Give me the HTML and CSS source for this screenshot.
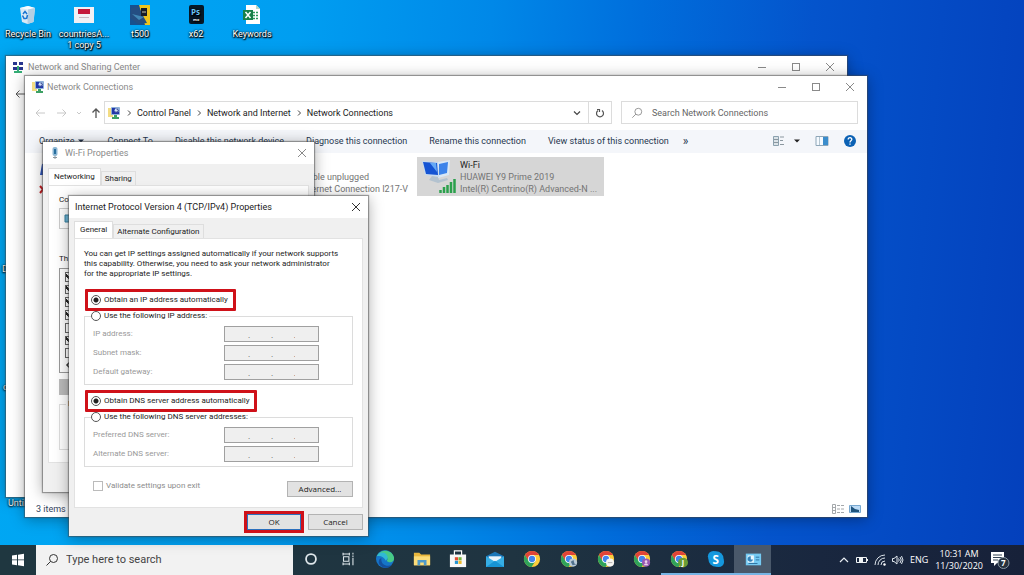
FILE: index.html
```html
<!DOCTYPE html>
<html lang="en">
<head>
<meta charset="utf-8">
<title>Desktop</title>
<link rel="stylesheet" href="styles.css">
</head>
<body>
<svg class="defs" aria-hidden="true">
  <symbol id="min" viewBox="0 0 10 10"><path d="M1 5.5h8" stroke="currentColor" fill="none"/></symbol>
  <symbol id="max" viewBox="0 0 10 10"><rect x="1.5" y="1.5" width="7" height="7" stroke="currentColor" fill="none"/></symbol>
  <symbol id="close" viewBox="0 0 10 10"><path d="M1 1l8 8M9 1L1 9" stroke="currentColor" fill="none"/></symbol>
  <symbol id="left" viewBox="0 0 12 12"><path d="M11 6H2M5.500 2.500L2 6l3.500 3.500" stroke="currentColor" fill="none"/></symbol>
  <symbol id="chev" viewBox="0 0 6 8"><path d="M2 1.500L4.500 4 2 6.500" stroke="currentColor" fill="none"/></symbol>
  <symbol id="mag" viewBox="0 0 14 14"><circle cx="8.500" cy="5.500" r="4" stroke="currentColor" fill="none"/><path d="M5.700 8.300L1.500 12.500" stroke="currentColor" fill="none"/></symbol>
  <symbol id="netfolder" viewBox="0 0 14 14">
    <path d="M1 2h5v9H1z" fill="#f3dc83"/><rect x="4" y="1" width="9" height="8" rx="1" fill="#8eb0d8"/>
    <path d="M5 2h3.500v3l3.500 1v2H5z" fill="#2236a8"/><circle cx="9.500" cy="4.500" r="2" fill="#cfe2f8"/><path d="M9.500 3a1.600 1.600 0 1 1-1 2.700" stroke="#15207c" fill="none"/>
    <path d="M7 9h3v2h2v2H5v-2h2z" fill="#3da164"/></symbol>
  <symbol id="chrome" viewBox="0 0 20 20">
    <circle cx="10" cy="10" r="9" fill="#fccd3c"/><path d="M10 5.500L10 10L6 12.300L2.200 5.500A9 9 0 0 1 17.800 5.500z" fill="#e04438"/><path d="M2.200 5.500A9 9 0 0 0 9.500 19l4.400-6.700L10 10l-4 2z" fill="#2fa35a"/>
    <circle cx="10" cy="10" r="4.400" fill="#fff"/><circle cx="10" cy="10" r="3.500" fill="#4184ee"/></symbol>
</svg>

<main class="desktop">
  <ul class="shortcuts">
    <li><svg class="ic" viewBox="0 0 20 20"><path d="M2 3l8-2 7 2-1.500 14-6 2L4 17z" fill="#d9e9f5"/><path d="M2 3l8 1.500L17 3l-7-2z" fill="#f6fbff"/><path d="M10 4.500l7-1.500-1.500 14-6 2z" fill="#b4cfe3"/><path d="M5 9l2-2.500L9 9M9.500 10l-1 4M4.500 10.500L6 13.500h2" stroke="#1975d1" stroke-width="1.500" fill="none"/></svg><span>Recycle Bin</span></li>
    <li><svg class="ic" viewBox="0 0 20 20"><path d="M0 2h20v16H0z" fill="#f1f0f4"/><path d="M4 4h12v5H4z" fill="#c4183a"/><path d="M5 12.500h10" stroke="#c9b9c1"/></svg><span>countriesA...<br>1 copy 5</span></li>
    <li><svg class="ic" viewBox="0 0 20 20"><path d="M0 0h20v20H0z" fill="#17508e"/><path d="M9 0h11v20h-5z" fill="#efc51c"/><path d="M1 3l7-2 4 8 5 9-9 1-8-6z" fill="#244e82"/><path d="M11 3h6v8h-6z" fill="#181d26" /><path d="M12 7h4" stroke="#c7c7ac"/><path d="M2 9l12 3-5 3z" fill="#4187b5"/></svg><span>t500</span></li>
    <li><svg class="ic" viewBox="0 0 20 20"><rect x="3" y="0" width="15" height="19" rx="2" fill="#061826"/><text x="5" y="10" class="ps">Ps</text><text x="7" y="16" class="ps-sub">mx</text></svg><span>x62</span></li>
    <li><svg class="ic" viewBox="0 0 20 20"><path d="M4 0h10l4 4v15H4z" fill="#fff"/><path d="M14 0v4h4z" fill="#b9d7c5"/><path d="M11 7.500h5M11 10.500h5M11 13.500h5" stroke="#2b9a5b" stroke-width="1.500" stroke-dasharray="2 1"/><path d="M1 5h10v10H1z" fill="#188048"/><path d="M3.500 7l5 6M8.500 7l-5 6" stroke="#fff" stroke-width="1.500"/></svg><span>Keywords</span></li>
  </ul>
  <span class="peek peek-a">D</span><span class="peek peek-b">c</span><span class="peek peek-c">Until</span>

  <section class="win sharing" aria-label="Network and Sharing Center">
    <header class="title"><svg class="i12" viewBox="0 0 12 12"><path d="M1 1h4v3H1zM7 1h4v3H7zM1 6h4v3H1zM7 6h4v3H7z" fill="#29368e"/><path d="M5 5h2v5h3v2H2v-2h3z" fill="#35ae76"/></svg><h2>Network and Sharing Center</h2>
      <div class="caps"><button aria-label="Minimize"><svg><use href="#min"/></svg></button><button aria-label="Maximize"><svg><use href="#max"/></svg></button><button aria-label="Close"><svg><use href="#close"/></svg></button></div></header>
    <div class="back"><svg class="i12"><use href="#left"/></svg></div>
  </section>

  <section class="win connections" aria-label="Network Connections">
    <header class="title"><svg class="i14"><use href="#netfolder"/></svg><h2>Network Connections</h2>
      <div class="caps"><button aria-label="Minimize"><svg><use href="#min"/></svg></button><button aria-label="Maximize"><svg><use href="#max"/></svg></button><button aria-label="Close"><svg><use href="#close"/></svg></button></div></header>
    <div class="nav">
      <div class="arrows"><svg class="i12"><use href="#left"/></svg><svg class="i12 flip"><use href="#left"/></svg><svg class="i6" viewBox="0 0 6 8"><path d="M1 3l2 2 2-2" stroke="currentColor" fill="none"/></svg><svg class="i12 up" viewBox="0 0 12 12"><path d="M6 11V2M2.500 5.500L6 2l3.500 3.500" stroke="currentColor" stroke-width="1.300" fill="none"/></svg></div>
      <div class="address"><svg class="i14"><use href="#netfolder"/></svg>
        <svg class="i6"><use href="#chev"/></svg><a href="#cp">Control Panel</a><svg class="i6"><use href="#chev"/></svg><a href="#ni">Network and Internet</a><svg class="i6"><use href="#chev"/></svg><a href="#nc">Network Connections</a>
        <button class="drop" aria-label="Previous locations"><svg class="i10" viewBox="0 0 10 10"><path d="M2 3.500L5 6.500 8 3.500" stroke="#444" fill="none" stroke-width="1.200"/></svg></button>
        <button class="refresh" aria-label="Refresh"><svg class="i10" viewBox="0 0 10 10"><path d="M3 2.500A3.500 3.500 0 1 0 7 2.500M2 1.500h2.500V4" stroke="#555" fill="none" stroke-width="1.200"/></svg></button></div>
      <label class="search"><svg class="i12"><use href="#mag"/></svg><input type="text" placeholder="Search Network Connections" aria-label="Search Network Connections"></label>
    </div>
    <div class="commands">
      <button>Organize <svg class="i8" viewBox="0 0 8 8"><path d="M1 2.500h6L4 5.500z" fill="#1c2c45"/></svg></button><button>Connect To</button><button>Disable this network device</button><button>Diagnose this connection</button><button>Rename this connection</button><button>View status of this connection</button><button class="more">»</button>
      <div class="views"><svg class="i14" viewBox="0 0 14 14"><path d="M1.500 2.500h5v9h-5z" fill="#dbe3e8" stroke="#8ba1ae"/><path d="M2 5.500h4M2 8.500h4M8 3h4M8 6.500h3M8 10.500h4" stroke="#8b979f"/></svg><svg class="i8" viewBox="0 0 8 8"><path d="M1 2.500h6L4 5.500z" fill="#222"/></svg><svg class="i14 pane" viewBox="0 0 14 14"><path d="M1 2.500h12v9H1z" fill="#f5faff" stroke="#8ea6b8"/><path d="M8 3h5v8H8z" fill="#3b8dcc"/><path d="M4.500 3v8" stroke="#b4c5d0"/></svg><svg class="i14" viewBox="0 0 14 14"><circle cx="7" cy="7" r="6" fill="#0b61b4"/><path d="M5.200 5.500c0-2.500 3.800-2.300 3.600 0C8.700 6.800 7 6.800 7 8.400M7 9.500v1.300" stroke="#fff" stroke-width="1.300" fill="none"/></svg></div>
    </div>
    <div class="items">
      <div class="item ethernet"><svg viewBox="0 0 18 36"><path d="M3 5l9-2v13H1z" fill="#2c52b9"/><path d="M1 27l6 7M7 27l-6 7" stroke="#c21b20" stroke-width="2"/></svg><p><br><span>Network cable unplugged</span><br><span>Intel(R) Ethernet Connection I217-V</span></p></div>
      <div class="item wifi"><svg viewBox="0 0 36 36"><path d="M17 3l12-2-1 15-11 3z" fill="#d9e8f5"/><path d="M18 5l9-2-1 11-8 2z" fill="#3b83ea"/><path d="M1 2l16 1 1 15-14-2z" fill="#c7dbef"/><path d="M2 3l14 1 1 12-12-1z" fill="#1554d3"/><path d="M9 4l6 0 1 9z" fill="#65a9f5"/><path d="M11 17l6 1 1 3 8-2 1 2-10 3-9-3z" fill="#b3c2cf"/><path d="M19.500 34v-3M23 34v-6M26.500 34v-8M30 34V23M33.500 34V20" stroke="#2ba04c" stroke-width="2.500"/></svg><p>Wi-Fi<br><span>HUAWEI Y9 Prime 2019</span><br><span>Intel(R) Centrino(R) Advanced-N ...</span></p></div>
    </div>
    <footer class="status"><span>3 items</span><span class="modes"><svg class="i12" viewBox="0 0 12 12"><path d="M.5 1.500h3v9h-3zM1 4.500h2M1 7.500h2M5 2.500h3M5 6h3M5 9.500h3M9 2.500h3M9 6h3M9 9.500h3" stroke="#a4a8ab" fill="none"/></svg><svg class="i12" viewBox="0 0 12 12"><path d="M.5 2.500h11v7H.5z" fill="#bddcf7" stroke="#78a8d0"/><path d="M2 3l4 3 4 1v2H2z" fill="#1e537d"/></svg></span></footer>
  </section>

  <section class="win wifiprops" aria-label="Wi-Fi Properties">
    <header class="title"><svg class="i12" viewBox="0 0 12 12"><rect x="3.500" y="0" width="5" height="9" rx="2" fill="#8cb6d3"/><path d="M5 2h2v5H5z" fill="#296f9f"/><path d="M6 9v3M4 10.500h4" stroke="#8a969e" fill="none"/></svg><h2>Wi-Fi Properties</h2><div class="caps"><button aria-label="Close"><svg><use href="#close"/></svg></button></div></header>
    <div class="tabs"><button class="tab on">Networking</button><button class="tab">Sharing</button></div>
    <div class="page">
      <p>Co</p>
      <div class="adapter"><svg class="i12" viewBox="0 0 12 12"><path d="M1 2h8v7H1z" fill="#6ab3d4" stroke="#367f9e"/></svg></div>
      <p>Th</p>
      <div class="list"><input type="checkbox" checked aria-label="Item 1"><input type="checkbox" checked aria-label="Item 2"><input type="checkbox" checked aria-label="Item 3"><input type="checkbox" checked aria-label="Item 4"><input type="checkbox" aria-label="Item 5"><input type="checkbox" checked aria-label="Item 6"><input type="checkbox" aria-label="Item 7"><svg class="i8" viewBox="0 0 8 8"><path d="M5 1L2 4l3 3" stroke="#333" stroke-width="1.500" fill="none"/></svg></div>
      <button class="install" aria-label="Install"></button>
      <fieldset class="descr"><legend>D</legend></fieldset>
    </div>
  </section>

  <section class="win ipv4" aria-label="Internet Protocol Version 4 (TCP/IPv4) Properties">
    <header class="title"><h2>Internet Protocol Version 4 (TCP/IPv4) Properties</h2><div class="caps"><button aria-label="Close"><svg><use href="#close"/></svg></button></div></header>
    <div class="tabs"><button class="tab on">General</button><button class="tab">Alternate Configuration</button></div>
    <form class="page">
      <p>You can get IP settings assigned automatically if your network supports<br>this capability. Otherwise, you need to ask your network administrator<br>for the appropriate IP settings.</p>
      <label class="radio marked"><input type="radio" name="ip" checked>Obtain an IP address automatically</label>
      <fieldset class="group"><legend><label class="radio"><input type="radio" name="ip">Use the following IP address:</label></legend>
        <label class="field">IP address:<input type="text" disabled value=".          .          ."></label>
        <label class="field">Subnet mask:<input type="text" disabled value=".          .          ."></label>
        <label class="field">Default gateway:<input type="text" disabled value=".          .          ."></label></fieldset>
      <label class="radio marked"><input type="radio" name="dns" checked>Obtain DNS server address automatically</label>
      <fieldset class="group"><legend><label class="radio"><input type="radio" name="dns">Use the following DNS server addresses:</label></legend>
        <label class="field">Preferred DNS server:<input type="text" disabled value=".          .          ."></label>
        <label class="field">Alternate DNS server:<input type="text" disabled value=".          .          ."></label></fieldset>
      <div class="bottom"><label class="radio off"><input type="checkbox" disabled>Validate settings upon exit</label><button type="button" class="btn">Advanced...</button></div>
    </form>
    <div class="actions"><span class="ring"><button class="btn ok">OK</button></span><button class="btn">Cancel</button></div>
  </section>
</main>

<footer class="taskbar">
  <button class="start" aria-label="Start"><svg viewBox="0 0 14 14"><path d="M1 2.500l5-.7v4.700H1zM7 1.700l6-.9v5.700H7zM1 7.300h5v4.900l-5-.7zM7 7.300h6v5.900l-6-.9z" fill="#fff"/></svg></button>
  <label class="tsearch"><svg class="i14"><use href="#mag"/></svg><input type="text" placeholder="Type here to search" aria-label="Type here to search"></label>
  <div class="apps">
    <button aria-label="Cortana"><svg viewBox="0 0 20 20"><circle cx="10" cy="10" r="5.500" stroke="#dfe7eb" stroke-width="2" fill="none"/></svg></button>
    <button aria-label="Task view"><svg viewBox="0 0 20 20"><path d="M4 4.500h8M4 15.500h8M5 7.500h6v5H5zM4.500 3v3M11.500 3v3M4.500 14v3M11.500 14v3M15.500 3v2M15.500 9v8M15.500 6v2" stroke="#dfe7eb" stroke-width="1.200" fill="none"/></svg></button>
    <button aria-label="Edge"><svg viewBox="0 0 20 20"><circle cx="10" cy="10" r="10" fill="#1675c8"/><path d="M1 7C4-1 17-2 20 8c1 6-6 7-8 4 3-4-3-8-11-5z" fill="#48ca86"/><path d="M1 7c4-7 11-4 12 1 0 2-1 2-2 4-2-4-6-6-10-5z" fill="#31b9d4"/><path d="M6 9c-1 6 4 10 11 8-3 5-13 3-14-3 0-3 1-4 3-5z" fill="#144f9e"/></svg></button>
    <button aria-label="File Explorer"><svg viewBox="0 0 20 20"><path d="M1 3h6l2 2h10v12H1z" fill="#e9b73d"/><path d="M1 7h18v10H1z" fill="#fbdc79"/><path d="M5 11h10v6h-3v-3H8v3H5z" fill="#4d99c9"/></svg></button>
    <button aria-label="Store"><svg viewBox="0 0 20 20"><path d="M6 6V1h8v5" stroke="#fff" stroke-width="1.300" fill="none"/><path d="M1 5h18v14H1z" fill="#f7f8f8"/><path d="M6.500 8H10v3.500H6.500z" fill="#e34b30"/><path d="M10.500 8H14v3.500h-3.500z" fill="#75b43c"/><path d="M6.500 12H10v3.500H6.500z" fill="#2395d3"/><path d="M10.500 12H14v3.500h-3.500z" fill="#edb92c"/></svg></button>
    <button aria-label="Mail"><svg viewBox="0 0 20 20"><path d="M0 7l10-5 10 5v12H0z" fill="#1976b8"/><path d="M3 7h14v6H3z" fill="#e7f3fb"/><path d="M0 7l10 6 10-6v12H0z" fill="#36aee5"/><path d="M0 19l10-7 10 7z" fill="#1793d3"/></svg></button>
    <button aria-label="Chrome"><svg viewBox="0 0 20 20"><use href="#chrome"/></svg></button>
    <button aria-label="Chrome profile 1"><svg viewBox="0 0 20 20"><use href="#chrome"/><circle cx="14.500" cy="14" r="4.500" fill="#b9c9d6"/><path d="M12 13l3-2 1 4 2 1-4 1z" fill="#50718d"/></svg></button>
    <button aria-label="Chrome profile 2"><svg viewBox="0 0 20 20"><use href="#chrome"/><circle cx="14.500" cy="14" r="4.500" fill="#f6f5f2"/><path d="M12 14h5" stroke="#aaa"/></svg></button>
    <button aria-label="Chrome profile 3"><svg viewBox="0 0 20 20"><use href="#chrome"/><circle cx="14.500" cy="14" r="4.500" fill="#9959b2"/><circle cx="14.500" cy="13" r="1.500" fill="#ead2e8"/><path d="M12 17c1-3 4-3 5 0z" fill="#ead2e8"/></svg></button>
    <button class="run" aria-label="Chrome profile J"><svg viewBox="0 0 20 20"><use href="#chrome"/><circle cx="14.500" cy="14" r="5.500" fill="#6a9d36"/><text x="13" y="17" class="badge">J</text></svg></button>
    <button class="run" aria-label="Skype"><svg viewBox="0 0 20 20"><circle cx="7" cy="7" r="6" fill="#1598de"/><circle cx="13" cy="13" r="6" fill="#1598de"/><circle cx="10" cy="10" r="8.500" fill="#1598de"/><text x="6" y="15" class="skype">S</text></svg></button>
    <button class="run active" aria-label="Control Panel"><svg viewBox="0 0 20 20"><path d="M2 4h17v13H2z" fill="#75caf3"/><path d="M4 6h7v8H4z" fill="#eaf7fd"/><path d="M7.500 7v3.500H10A3 3 0 1 1 7.500 7z" fill="#3482b9"/><path d="M13 8h4M13 11h4M5 15h10" stroke="#286d9e"/></svg></button>
  </div>
  <div class="tray">
    <svg class="i10" viewBox="0 0 10 10"><path d="M1 7l4-4 4 4" stroke="#e8edf2" stroke-width="1.200" fill="none"/></svg>
    <svg class="i12" viewBox="0 0 12 12"><path d="M.5 3.500h10v5H.5z" stroke="#eef2f5" fill="none"/><path d="M3 4h4v4H3zM11 5h1v2h-1z" fill="#eef2f5"/></svg>
    <svg class="i12" viewBox="0 0 12 12"><path d="M1 11A10 10 0 0 1 11 1M4 11a7 7 0 0 1 7-7M7 11a4 4 0 0 1 4-4" stroke="#dce3ea" fill="none"/><circle cx="10.500" cy="10.500" r="1.200" fill="#fff"/></svg>
    <svg class="i12" viewBox="0 0 12 12"><path d="M.5 4.500H2l3-2.500v8L2 7.500H.500zM6.500 4.500q1.500 1.500 0 3M8 3q2.500 3 0 6M9.500 2q3 4 0 8" stroke="#dfe6ed" fill="none"/></svg>
    <span>ENG</span>
    <time>10:31 AM<br>11/30/2020</time>
    <svg class="note" viewBox="0 0 20 20"><path d="M1 2h13v11H7l-3 3v-3H1z" fill="#fff"/><path d="M3 5h9M3 7.500h9M3 10h5" stroke="#344455"/><circle cx="13.500" cy="13" r="5.500" fill="#26313e" stroke="#8996a3"/><text x="11" y="16" class="badge">7</text></svg>
  </div>
</footer>
</body>
</html>
```
FILE: styles.css
```css
* { box-sizing: border-box; }
body { margin: 0; height: 100vh; display: flex; flex-direction: column; overflow: hidden; font: 9px/12px Roboto, "Open Sans", sans-serif; color: #1c1c1c; }
h2, p, ul { margin: 0; padding: 0; font: inherit; list-style: none; }
button, input { font: inherit; color: inherit; margin: 0; }
button { border: 0; background: none; padding: 0; }
svg { display: block; flex: none; }
a { color: inherit; text-decoration: none; }
.defs { position: absolute; width: 0; height: 0; }
.i6 { width: 6px; height: 8px; }
.i8 { width: 8px; height: 8px; }
.i10 { width: 10px; height: 10px; }
.i12 { width: 12px; height: 12px; }
.i14 { width: 14px; height: 14px; }

.desktop { position: relative; flex: 1; min-height: 0; background: linear-gradient(95deg, #00a8f3 0%, #009ef1 28%, #0088e8 46%, #006edc 60%, #0454cc 76%, #0440bc 100%); }
.shortcuts { display: flex; color: #fff; text-align: center; }
.shortcuts li { width: 56px; display: flex; flex-direction: column; align-items: center; padding-top: 5px; gap: 4px; line-height: 11px; white-space: nowrap; text-shadow: 0 1px 2px #000, 0 0 2px #000, 1px 1px 1px #000; }
.ic { width: 20px; height: 20px; }
.ps { font: 700 8px "Open Sans", sans-serif; fill: #69c5f5; }
.ps-sub { font: 700 4px "Open Sans", sans-serif; fill: #fff; }
.peek { position: absolute; color: #fff; text-shadow: 0 1px 2px #000, 0 0 2px #000; }
.peek-a { left: 2px; top: 263px; }
.peek-b { left: 3px; top: 381px; }
.peek-c { left: 8px; top: 497px; }

.win { position: absolute; background: #fff; box-shadow: 0 0 1px 1px rgba(70, 70, 70, .5), 0 2px 14px rgba(0, 0, 0, .35); display: flex; flex-direction: column; }
.title { display: flex; align-items: center; height: 22px; padding-left: 6px; gap: 4px; color: #8a8a8a; flex: none; }
.caps { margin-left: auto; display: flex; color: #8a8a8a; }
.caps button { width: 34px; display: flex; justify-content: center; }
.caps svg { width: 10px; height: 10px; }
.sharing { left: 6px; top: 56px; right: 177px; bottom: 48px; }
.back { padding: 10px 8px; color: #555; }
.connections { left: 25px; top: 76px; right: 157px; bottom: 28px; }
.connections .title { gap: 2px; }

.nav { display: flex; align-items: center; padding: 3px 9px 6px 8px; height: 32px; }
.arrows { display: flex; align-items: center; gap: 10px; width: 71px; color: #c8c8c8; padding-left: 1px; }
.arrows .i6 { margin: 0 -2px; }
.flip { transform: scaleX(-1); }
.up { color: #555; }
.address { flex: 1; height: 23px; border: 1px solid #dcdcdc; display: flex; align-items: center; gap: 5px; padding-left: 2px; }
.address .i6 { color: #444; }
.drop { margin-left: auto; width: 20px; }
.drop svg, .refresh svg { margin: auto; }
.refresh { width: 23px; margin-left: -4px; border-left: 1px solid #dcdcdc; align-self: stretch; }
.search { width: 237px; height: 23px; margin-left: 9px; border: 1px solid #dcdcdc; display: flex; align-items: center; gap: 9px; padding-left: 9px; color: #888; }
.search input, .tsearch input { flex: 1; min-width: 0; border: 0; padding: 0; background: none; outline: 0; }
.search input::placeholder { color: #666; opacity: 1; }
.commands { display: flex; align-items: center; height: 23px; padding: 0 10px 2px 14px; gap: 22px; background: #f4f6fa; color: #26374f; }
.commands button { display: flex; align-items: center; gap: 3px; white-space: nowrap; }
.commands .more { margin-left: -8px; font-size: 12px; }
.views { margin-left: auto; display: flex; align-items: center; gap: 7px; }
.views .pane { margin: 0 7px; }
.items { display: flex; flex: 1; padding: 4px 0 0 14px; }
.item { display: flex; height: 39px; padding: 2px 4px; white-space: nowrap; }
.item span { color: #747474; }
.ethernet { width: 378px; padding: 2px 9px 0 0; }
.ethernet svg { width: 18px; height: 36px; }
.ethernet p { margin-left: auto; }
.wifi { width: 187px; background: #d6d6d6; gap: 3px; }
.wifi svg { width: 36px; height: 36px; }
.status { display: flex; justify-content: space-between; align-items: center; height: 18px; padding: 2px 6px 0 11px; color: #34455e; }
.modes { display: flex; gap: 5px; }

.wifiprops { left: 43px; top: 142px; width: 271px; height: 350px; background: #f0f0f0; }
.wifiprops .title, .ipv4 .title { background: #fff; }
.wifiprops .caps button { width: 24px; }
.tabs { display: flex; align-items: flex-end; height: 21px; padding-left: 5px; font: 8px/10px Roboto, "Open Sans", sans-serif; flex: none; }
.tab { height: 14px; padding: 0 3px; border: 1px solid #dedede; border-bottom: 0; white-space: nowrap; }
.tab.on { height: 17px; padding: 0 5px; background: #fff; }
.page { background: #fff; border: 1px solid #e2e2e2; margin: 0 5px; font: 8px/10px Roboto, "Open Sans", sans-serif; }
.wifiprops .page { flex: 1; margin-bottom: 29px; padding: 9px 10px; }
.adapter { height: 21px; margin: 3px 0 25px; padding: 4px; border: 1px solid #ccc; }
.list { display: flex; flex-direction: column; gap: 3px; height: 105px; margin-top: 4px; padding: 3px 5px; border: 1px solid #999; }
.list input { appearance: none; width: 10px; height: 10px; border: 1px solid #666; background: #fff; }
.list input:checked { background: linear-gradient(45deg, #fff 3px, #222 3px, #222 5px, #fff 5px); }
.install { display: block; width: 70px; height: 16px; margin: 6px 0 4px; background: #bbb; }
.descr { margin: 0; padding: 0 6px; border: 1px solid #ddd; height: 51px; }

.ipv4 { left: 69px; top: 196px; width: 299px; background: #f0f0f0; }
.ipv4 .title { color: #1b1b1b; }
.ipv4 .caps button { width: 25px; color: #333; }
.ipv4 .tabs { height: 20px; }
.ipv4 .page { padding: 10px 9px; }
.ipv4 .page p { padding-bottom: 10px; white-space: nowrap; }
.radio { display: flex; align-items: center; gap: 3px; white-space: nowrap; }
.radio input { appearance: none; width: 10px; height: 10px; border: 1px solid #555; border-radius: 50%; background: #fff; flex: none; }
.radio input:checked { background: radial-gradient(circle, #222 0 2px, #fff 3px); }
.radio.off { color: #8c8c8c; }
.radio.off input { border-color: #bbb; border-radius: 0; }
.marked { width: max-content; height: 22px; margin-left: 1px; border: 3px solid #cf1119; padding: 0 5px 0 3px; border-radius: 1px; }
.group { margin: 0 0 5px; padding: 5px 33px 4px 8px; border: 1px solid #dcdcdc; display: flex; flex-direction: column; gap: 3px; }
.group legend { padding: 0 2px 0 0; margin-left: -2px; }
.field { display: flex; justify-content: space-between; align-items: center; color: #999; }
.field input { width: 95px; height: 16px; padding: 0 23px; border: 1px solid #a0a0a0; background: #efefef; color: #666; white-space: pre; font-family: "Open Sans", sans-serif; }
.bottom { display: flex; justify-content: space-between; align-items: flex-start; padding: 9px 0 0 9px; }
.btn { width: 66px; height: 16px; border: 1px solid #b3b3b3; background: #e2e2e2; font: 8px/10px "Open Sans", sans-serif; }
.actions { display: flex; justify-content: flex-end; align-items: center; gap: 4px; padding: 3px 5px; }
.actions .btn { width: 55px; }
.ring { border: 3px solid #cf1119; }
.actions .ok { width: 54px; border: 1px solid #2c70bd; display: block; }

.taskbar { height: 30px; display: flex; flex: none; color: #fff; font-family: "Open Sans", sans-serif; background: linear-gradient(90deg, #1f3740 0%, #1f3441 50%, #19273f 80%, #172139 100%); }
.start { width: 36px; }
.start svg { width: 14px; height: 14px; margin: auto; }
.tsearch { width: 257px; background: #f2f2f2; color: #333; display: flex; align-items: center; gap: 7px; padding-left: 9px; font: 11px/16px Roboto, sans-serif; }
.tsearch input::placeholder { color: #444; opacity: 1; }
.apps { display: flex; width: 478px; }
.apps button { flex: 1; border-bottom: 2px solid transparent; }
.apps svg { width: 18px; height: 18px; margin: auto; }
.apps .run { border-bottom-color: #76b4e4; }
.apps .active { background: #49586a; }
.badge { font: 700 8px "Open Sans", sans-serif; fill: #fff; }
.skype { font: 700 13px "Open Sans", sans-serif; fill: #fff; }
.tray { margin-left: auto; display: flex; align-items: center; gap: 7px; padding-right: 14px; text-align: center; }
.tray .i12 { margin-right: -1px; }
.note { width: 20px; height: 20px; }
```
